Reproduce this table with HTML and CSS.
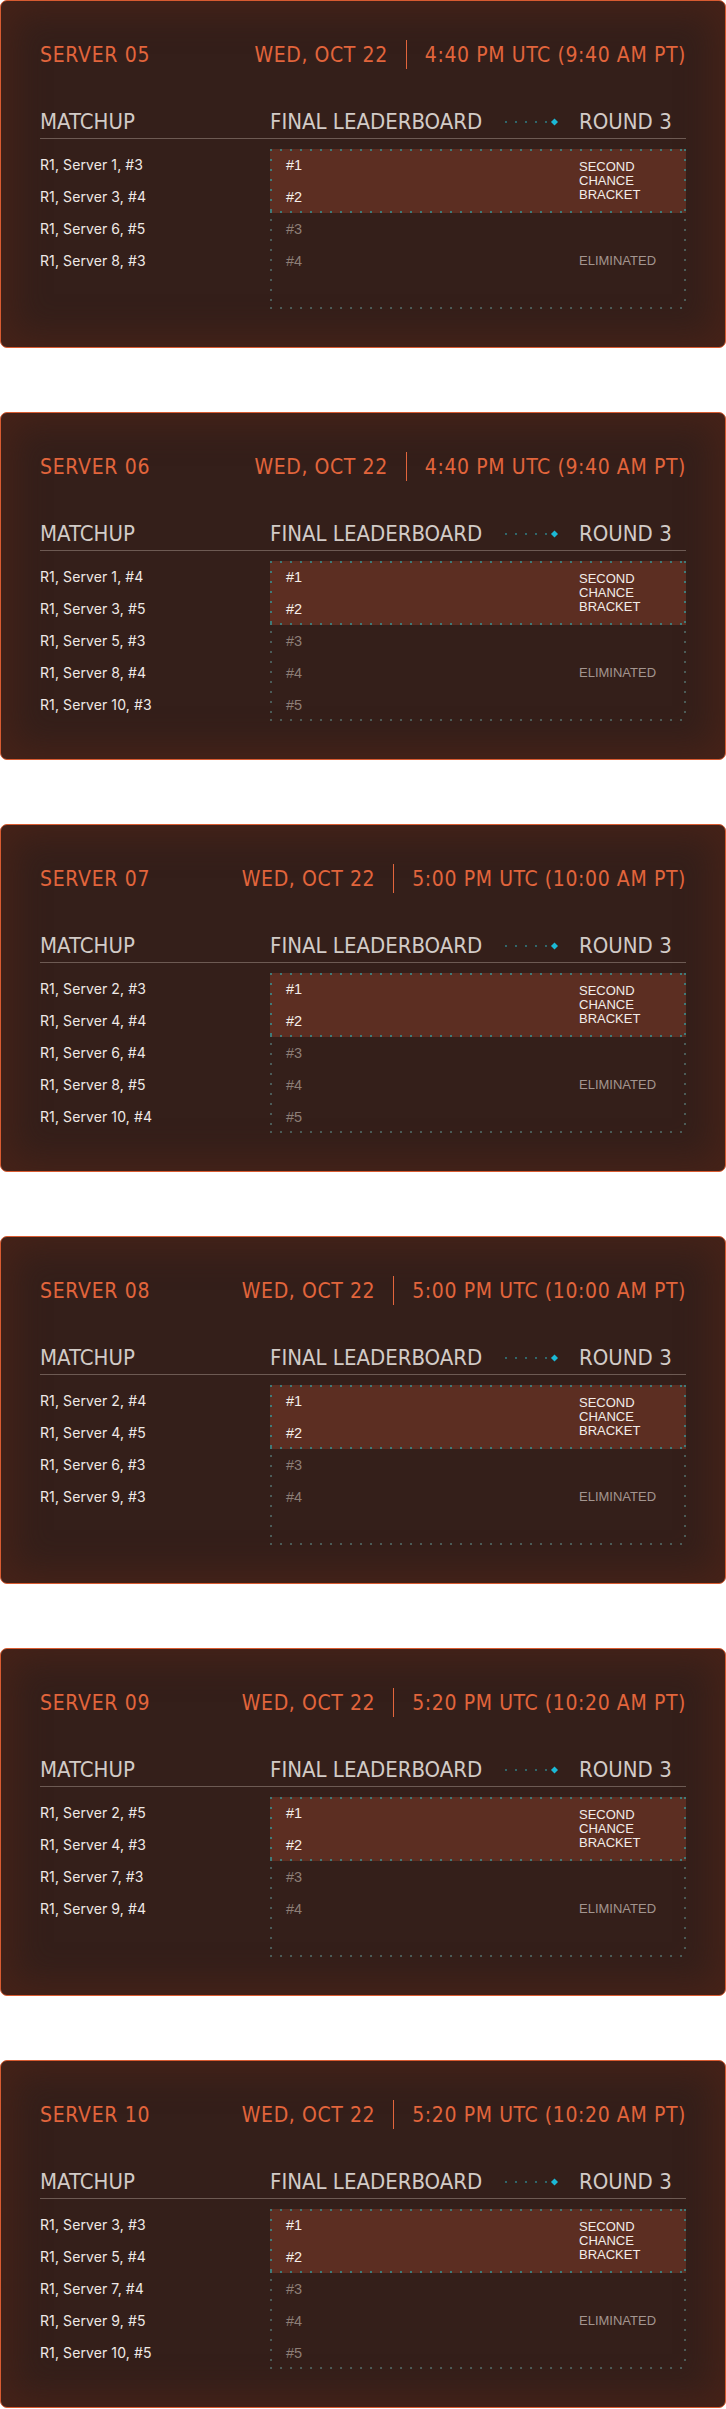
FILE: index.html
```html
<!DOCTYPE html>
<html lang="en">
<head>
<meta charset="utf-8">
<title>Second Chance Bracket</title>
<link rel="stylesheet" href="styles.css">
</head>
<body>
<main class="list">

<section class="card">
  <header class="card-head">
    <h2 class="server">SERVER 05</h2>
    <div class="when"><span>WED, OCT 22</span><i class="divider"></i><span>4:40 PM UTC (9:40 AM PT)</span></div>
  </header>
  <div class="cols-head">
    <span>MATCHUP</span>
    <span class="lb">FINAL LEADERBOARD<svg class="conn" width="56" height="8" viewBox="0 0 56 8"><circle cx="1" cy="4" r="0.9"/><circle cx="11" cy="4" r="0.9"/><circle cx="21" cy="4" r="0.9"/><circle cx="31" cy="4" r="0.9"/><circle cx="41" cy="4" r="0.9"/><rect class="dia" x="47" y="1.5" width="5" height="5" transform="rotate(45 49.5 4)"/></svg></span>
    <span>ROUND 3</span>
  </div>
  <div class="body">
    <ul class="matchups">
      <li>R1, Server 1, #3</li><li>R1, Server 3, #4</li><li>R1, Server 6, #5</li><li>R1, Server 8, #3</li>
    </ul>
    <div class="board">
      <div class="seg adv"><ul class="ranks"><li>#1</li><li>#2</li></ul><p class="tag">SECOND<br>CHANCE<br>BRACKET</p></div>
      <div class="seg elim"><ul class="ranks"><li>#3</li><li>#4</li><li></li></ul><p class="tag">ELIMINATED</p></div>
    </div>
  </div>
</section>

<section class="card">
  <header class="card-head">
    <h2 class="server">SERVER 06</h2>
    <div class="when"><span>WED, OCT 22</span><i class="divider"></i><span>4:40 PM UTC (9:40 AM PT)</span></div>
  </header>
  <div class="cols-head">
    <span>MATCHUP</span>
    <span class="lb">FINAL LEADERBOARD<svg class="conn" width="56" height="8" viewBox="0 0 56 8"><circle cx="1" cy="4" r="0.9"/><circle cx="11" cy="4" r="0.9"/><circle cx="21" cy="4" r="0.9"/><circle cx="31" cy="4" r="0.9"/><circle cx="41" cy="4" r="0.9"/><rect class="dia" x="47" y="1.5" width="5" height="5" transform="rotate(45 49.5 4)"/></svg></span>
    <span>ROUND 3</span>
  </div>
  <div class="body">
    <ul class="matchups">
      <li>R1, Server 1, #4</li><li>R1, Server 3, #5</li><li>R1, Server 5, #3</li><li>R1, Server 8, #4</li><li>R1, Server 10, #3</li>
    </ul>
    <div class="board">
      <div class="seg adv"><ul class="ranks"><li>#1</li><li>#2</li></ul><p class="tag">SECOND<br>CHANCE<br>BRACKET</p></div>
      <div class="seg elim"><ul class="ranks"><li>#3</li><li>#4</li><li>#5</li></ul><p class="tag">ELIMINATED</p></div>
    </div>
  </div>
</section>

<section class="card">
  <header class="card-head">
    <h2 class="server">SERVER 07</h2>
    <div class="when"><span>WED, OCT 22</span><i class="divider"></i><span>5:00 PM UTC (10:00 AM PT)</span></div>
  </header>
  <div class="cols-head">
    <span>MATCHUP</span>
    <span class="lb">FINAL LEADERBOARD<svg class="conn" width="56" height="8" viewBox="0 0 56 8"><circle cx="1" cy="4" r="0.9"/><circle cx="11" cy="4" r="0.9"/><circle cx="21" cy="4" r="0.9"/><circle cx="31" cy="4" r="0.9"/><circle cx="41" cy="4" r="0.9"/><rect class="dia" x="47" y="1.5" width="5" height="5" transform="rotate(45 49.5 4)"/></svg></span>
    <span>ROUND 3</span>
  </div>
  <div class="body">
    <ul class="matchups">
      <li>R1, Server 2, #3</li><li>R1, Server 4, #4</li><li>R1, Server 6, #4</li><li>R1, Server 8, #5</li><li>R1, Server 10, #4</li>
    </ul>
    <div class="board">
      <div class="seg adv"><ul class="ranks"><li>#1</li><li>#2</li></ul><p class="tag">SECOND<br>CHANCE<br>BRACKET</p></div>
      <div class="seg elim"><ul class="ranks"><li>#3</li><li>#4</li><li>#5</li></ul><p class="tag">ELIMINATED</p></div>
    </div>
  </div>
</section>

<section class="card">
  <header class="card-head">
    <h2 class="server">SERVER 08</h2>
    <div class="when"><span>WED, OCT 22</span><i class="divider"></i><span>5:00 PM UTC (10:00 AM PT)</span></div>
  </header>
  <div class="cols-head">
    <span>MATCHUP</span>
    <span class="lb">FINAL LEADERBOARD<svg class="conn" width="56" height="8" viewBox="0 0 56 8"><circle cx="1" cy="4" r="0.9"/><circle cx="11" cy="4" r="0.9"/><circle cx="21" cy="4" r="0.9"/><circle cx="31" cy="4" r="0.9"/><circle cx="41" cy="4" r="0.9"/><rect class="dia" x="47" y="1.5" width="5" height="5" transform="rotate(45 49.5 4)"/></svg></span>
    <span>ROUND 3</span>
  </div>
  <div class="body">
    <ul class="matchups">
      <li>R1, Server 2, #4</li><li>R1, Server 4, #5</li><li>R1, Server 6, #3</li><li>R1, Server 9, #3</li>
    </ul>
    <div class="board">
      <div class="seg adv"><ul class="ranks"><li>#1</li><li>#2</li></ul><p class="tag">SECOND<br>CHANCE<br>BRACKET</p></div>
      <div class="seg elim"><ul class="ranks"><li>#3</li><li>#4</li><li></li></ul><p class="tag">ELIMINATED</p></div>
    </div>
  </div>
</section>

<section class="card">
  <header class="card-head">
    <h2 class="server">SERVER 09</h2>
    <div class="when"><span>WED, OCT 22</span><i class="divider"></i><span>5:20 PM UTC (10:20 AM PT)</span></div>
  </header>
  <div class="cols-head">
    <span>MATCHUP</span>
    <span class="lb">FINAL LEADERBOARD<svg class="conn" width="56" height="8" viewBox="0 0 56 8"><circle cx="1" cy="4" r="0.9"/><circle cx="11" cy="4" r="0.9"/><circle cx="21" cy="4" r="0.9"/><circle cx="31" cy="4" r="0.9"/><circle cx="41" cy="4" r="0.9"/><rect class="dia" x="47" y="1.5" width="5" height="5" transform="rotate(45 49.5 4)"/></svg></span>
    <span>ROUND 3</span>
  </div>
  <div class="body">
    <ul class="matchups">
      <li>R1, Server 2, #5</li><li>R1, Server 4, #3</li><li>R1, Server 7, #3</li><li>R1, Server 9, #4</li>
    </ul>
    <div class="board">
      <div class="seg adv"><ul class="ranks"><li>#1</li><li>#2</li></ul><p class="tag">SECOND<br>CHANCE<br>BRACKET</p></div>
      <div class="seg elim"><ul class="ranks"><li>#3</li><li>#4</li><li></li></ul><p class="tag">ELIMINATED</p></div>
    </div>
  </div>
</section>

<section class="card">
  <header class="card-head">
    <h2 class="server">SERVER 10</h2>
    <div class="when"><span>WED, OCT 22</span><i class="divider"></i><span>5:20 PM UTC (10:20 AM PT)</span></div>
  </header>
  <div class="cols-head">
    <span>MATCHUP</span>
    <span class="lb">FINAL LEADERBOARD<svg class="conn" width="56" height="8" viewBox="0 0 56 8"><circle cx="1" cy="4" r="0.9"/><circle cx="11" cy="4" r="0.9"/><circle cx="21" cy="4" r="0.9"/><circle cx="31" cy="4" r="0.9"/><circle cx="41" cy="4" r="0.9"/><rect class="dia" x="47" y="1.5" width="5" height="5" transform="rotate(45 49.5 4)"/></svg></span>
    <span>ROUND 3</span>
  </div>
  <div class="body">
    <ul class="matchups">
      <li>R1, Server 3, #3</li><li>R1, Server 5, #4</li><li>R1, Server 7, #4</li><li>R1, Server 9, #5</li><li>R1, Server 10, #5</li>
    </ul>
    <div class="board">
      <div class="seg adv"><ul class="ranks"><li>#1</li><li>#2</li></ul><p class="tag">SECOND<br>CHANCE<br>BRACKET</p></div>
      <div class="seg elim"><ul class="ranks"><li>#3</li><li>#4</li><li>#5</li></ul><p class="tag">ELIMINATED</p></div>
    </div>
  </div>
</section>

</main>
</body>
</html>
```
FILE: styles.css
```css
* { box-sizing: border-box; }

html, body {
  margin: 0;
  padding: 0;
  background: #ffffff;
}

body {
  font-family: "Inter", "Roboto", sans-serif;
}

.list {
  display: flex;
  flex-direction: column;
  gap: 64px;
}

.card {
  height: 348px;
  border: 1px solid #d85b31;
  border-radius: 7px;
  padding: 39px 39px 0 39px;
  background: #341f1a;
  box-shadow: inset 0 0 34px 12px rgba(82, 36, 24, 0.6);
}

.card-head {
  display: flex;
  justify-content: space-between;
  align-items: center;
  height: 29px;
  color: #e2653c;
  font-family: "DejaVu Sans Condensed", "DejaVu Sans", sans-serif;
  font-stretch: condensed;
  font-size: 21px;
  letter-spacing: 0.6px;
}

.server {
  margin: 0;
  font-size: 21px;
  font-weight: normal;
  letter-spacing: 0.7px;
}

.when {
  display: flex;
  align-items: center;
}

.divider {
  display: block;
  width: 1px;
  height: 29px;
  background: #e2653c;
  margin: 0 18px 0 18px;
}

.cols-head {
  display: grid;
  grid-template-columns: 230px 309px 107px;
  align-items: center;
  margin-top: 40px;
  height: 30px;
  padding-bottom: 3px;
  border-bottom: 1px solid #6d5a53;
  color: #d2cbc7;
  font-family: "DejaVu Sans Condensed", "DejaVu Sans", sans-serif;
  font-stretch: condensed;
  font-size: 22px;
  line-height: 26px;
}

.lb {
  display: flex;
  align-items: center;
  justify-content: space-between;
  padding-right: 18px;
}

.conn circle { fill: #2f8a93; }
.conn .dia { fill: #1bb9d6; }

.body {
  display: grid;
  grid-template-columns: 230px 416px;
  margin-top: 10px;
}

.matchups {
  list-style: none;
  margin: 0;
  padding: 0;
}

.matchups li {
  height: 32px;
  line-height: 32px;
  font-size: 14px;
  letter-spacing: 0.1px;
  color: #efe9e6;
}

.board {
  display: flex;
  flex-direction: column;
  height: 160px;
  background:
    linear-gradient(to right, rgba(96, 140, 138, 0.55) 2px, transparent 2px) left top / 10px 2px repeat-x,
    linear-gradient(to right, rgba(96, 140, 138, 0.55) 2px, transparent 2px) left bottom / 10px 2px repeat-x,
    linear-gradient(to bottom, rgba(96, 140, 138, 0.55) 2px, transparent 2px) left top / 2px 10px repeat-y,
    linear-gradient(to bottom, rgba(96, 140, 138, 0.55) 2px, transparent 2px) right top / 2px 10px repeat-y;
}

.seg {
  display: flex;
  align-items: center;
}

.adv {
  height: 64px;
  background:
    linear-gradient(to right, #3f7b79 2px, transparent 2px) left top / 10px 2px repeat-x,
    linear-gradient(to right, #3f7b79 2px, transparent 2px) left bottom / 10px 2px repeat-x,
    linear-gradient(to bottom, #3f7b79 2px, transparent 2px) left top / 2px 10px repeat-y,
    linear-gradient(to bottom, #3f7b79 2px, transparent 2px) right top / 2px 10px repeat-y,
    #5c2e22;
}

.elim {
  height: 96px;
}

.ranks {
  list-style: none;
  margin: 0;
  padding: 0 0 0 16px;
  width: 309px;
}

.ranks li {
  height: 32px;
  line-height: 32px;
  font-family: "Liberation Sans", Arial, sans-serif;
  font-size: 14.5px;
}

.adv .ranks li { color: #f4eeea; }
.elim .ranks li { color: #8d7e77; }

.tag {
  margin: 0;
  font-family: "Liberation Sans", Arial, sans-serif;
  font-size: 13px;
  line-height: 14px;
}

.adv .tag { color: #f2ece8; }
.elim .tag { color: #a3958f; }
```
